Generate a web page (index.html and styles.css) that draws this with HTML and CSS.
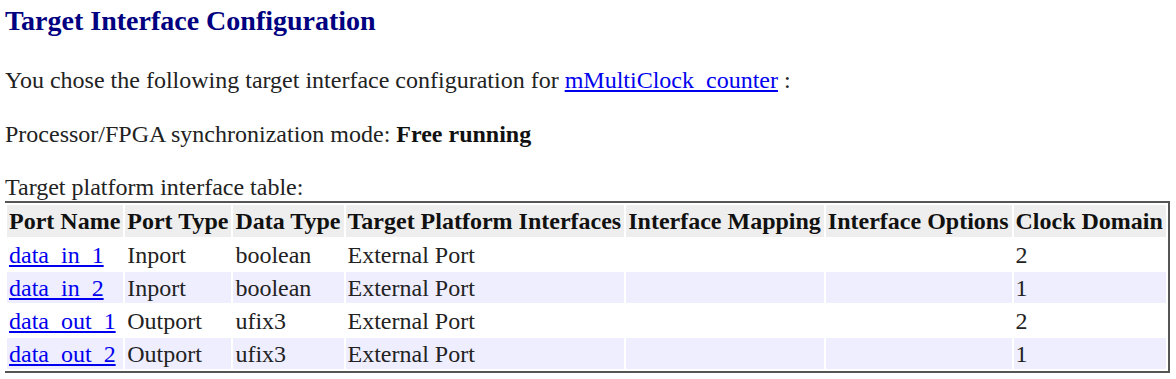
FILE: index.html
```html
<!DOCTYPE html>
<html>
<head>
<meta charset="utf-8">
<link rel="stylesheet" href="styles.css">
</head>
<body>
<h2 class="title">Target Interface Configuration</h2>
<p class="line">You chose the following target interface configuration for <a class="link" href="#">mMultiClock_counter</a> :</p>
<p class="line">Processor/FPGA synchronization mode: <b>Free running</b></p>
<div class="caption">Target platform interface table:</div>
<table class="ports">
<thead>
<tr><th>Port Name</th><th>Port Type</th><th>Data Type</th><th>Target Platform Interfaces</th><th>Interface Mapping</th><th>Interface Options</th><th>Clock Domain</th></tr>
</thead>
<tbody>
<tr><td><a class="link" href="#">data_in_1</a></td><td>Inport</td><td>boolean</td><td>External Port</td><td></td><td></td><td>2</td></tr>
<tr class="alt"><td><a class="link" href="#">data_in_2</a></td><td>Inport</td><td>boolean</td><td>External Port</td><td></td><td></td><td>1</td></tr>
<tr><td><a class="link" href="#">data_out_1</a></td><td>Outport</td><td>ufix3</td><td>External Port</td><td></td><td></td><td>2</td></tr>
<tr class="alt"><td><a class="link" href="#">data_out_2</a></td><td>Outport</td><td>ufix3</td><td>External Port</td><td></td><td></td><td>1</td></tr>
</tbody>
</table>
</body>
</html>
```
FILE: styles.css
```css
body {
  margin: 0 5px;
  font-family: "Liberation Serif", "Times New Roman", serif;
  font-size: 24px;
  line-height: 28px;
  color: #222;
  background: #fff;
}
.title {
  font-size: 28px;
  line-height: 32px;
  color: #000080;
  margin: 5px 0 29px 0;
}
.line {
  margin: 0 0 26px 0;
}
.line b {
  color: #111;
}
.caption {
  margin-top: -1px;
}
.link {
  color: #0000ee;
}
.ports {
  border: 2px solid #555;
  border-spacing: 2px;
  margin-left: -2px;
}
.ports th {
  background: #eeeeee;
  text-align: left;
  padding: 2px 3px 2px 2px;
  height: 28px;
  color: #111;
  white-space: nowrap;
}
.ports td {
  padding: 2px 3px 1px 2px;
  line-height: 28px;
  white-space: nowrap;
}
.ports tr.alt td {
  background: #eeeeff;
}
```
